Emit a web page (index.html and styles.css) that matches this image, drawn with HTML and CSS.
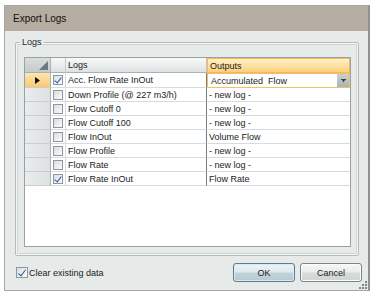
FILE: index.html
```html
<!DOCTYPE html>
<html lang="en">
<head>
  <meta charset="UTF-8" />
  <title>Export Logs</title>
  <link rel="stylesheet" href="styles.css">
</head>
<body>
  <div class="window">
    <div class="titlebar">Export Logs</div>
    <div class="content">
      <fieldset class="group">
        <legend>Logs</legend>
        <div class="grid">
          <div class="hcell corner">
            <svg width="9" height="9" viewBox="0 0 9 9"><path d="M9 0 L9 9 L0 9 Z" fill="#6f787b"/></svg>
          </div>
          <div class="hcell"></div>
          <div class="hcell text">Logs</div>
          <div class="hcell text current">Outputs</div>

          <div class="rh active">
            <svg width="5" height="7" viewBox="0 0 5 7"><path d="M0 0 L5 3.5 L0 7 Z" fill="#111"/></svg>
          </div>
          <div class="cell cb"><span class="box checked"></span></div>
          <div class="cell name">Acc. Flow Rate InOut</div>
          <div class="cell out editing">
            <span class="combo-text">Accumulated&nbsp; Flow</span>
            <span class="drop">
              <svg width="5" height="4" viewBox="0 0 5 4"><path d="M0 0 H5 V1 H0 Z M1 1 H4 L2.5 3.5 Z" fill="#3a4448"/></svg>
            </span>
          </div>

          <div class="rh"></div>
          <div class="cell cb"><span class="box"></span></div>
          <div class="cell name">Down Profile (@ 227 m3/h)</div>
          <div class="cell out">- new log -</div>

          <div class="rh"></div>
          <div class="cell cb"><span class="box"></span></div>
          <div class="cell name">Flow Cutoff 0</div>
          <div class="cell out">- new log -</div>

          <div class="rh"></div>
          <div class="cell cb"><span class="box"></span></div>
          <div class="cell name">Flow Cutoff 100</div>
          <div class="cell out">- new log -</div>

          <div class="rh"></div>
          <div class="cell cb"><span class="box"></span></div>
          <div class="cell name">Flow InOut</div>
          <div class="cell out">Volume Flow</div>

          <div class="rh"></div>
          <div class="cell cb"><span class="box"></span></div>
          <div class="cell name">Flow Profile</div>
          <div class="cell out">- new log -</div>

          <div class="rh"></div>
          <div class="cell cb"><span class="box"></span></div>
          <div class="cell name">Flow Rate</div>
          <div class="cell out">- new log -</div>

          <div class="rh"></div>
          <div class="cell cb"><span class="box checked"></span></div>
          <div class="cell name">Flow Rate InOut</div>
          <div class="cell out">Flow Rate</div>
        </div>
      </fieldset>

      <div class="footer">
        <label class="clear"><span class="box big checked"></span>Clear existing data</label>
        <div class="buttons">
          <button class="btn default">OK</button>
          <button class="btn">Cancel</button>
        </div>
      </div>

      <svg class="grip" width="8" height="8" viewBox="0 0 8 8">
        <g fill="#7d8689">
          <rect x="6" y="0" width="2" height="2"/>
          <rect x="3" y="3" width="2" height="2"/>
          <rect x="6" y="3" width="2" height="2"/>
          <rect x="0" y="6" width="2" height="2"/>
          <rect x="3" y="6" width="2" height="2"/>
          <rect x="6" y="6" width="2" height="2"/>
        </g>
      </svg>
    </div>
  </div>
</body>
</html>
```

FILE: styles.css
```css
body {
  margin: 0;
  background-color: #ffffff;
  font-family: 'Liberation Sans', Arial, sans-serif;
  font-size: 9px;
  color: #1b1b1b;
}
.window {
  margin: 5px 0 0 4px;
  width: 366px;
  height: 286px;
  box-sizing: border-box;
  border: 1px solid #a3a9ab;
  border-right: 2px solid #8d9497;
  background-color: #e6eae9;
  display: flex;
  flex-direction: column;
}
.titlebar {
  height: 25px;
  line-height: 25px;
  padding-left: 8px;
  background-color: #b5aca2;
  font-size: 10px;
  color: #111;
}
.content {
  position: relative;
  flex: 1;
}
.group {
  margin: 6px 0 0 10px;
  width: 344px;
  box-sizing: border-box;
  padding: 9px 7px 8px 8px;
  border: 1px solid #b3bbbc;
  border-radius: 2px;
  box-shadow: inset 0 0 0 1px #f5f7f7, inset 0 0 0 2px #cfd5d6;
}
.group legend {
  margin-left: -4px;
  padding: 0 2px;
  line-height: 11px;
  font-size: 9px;
  color: #1e2a3a;
}
.grid {
  height: 190px;
  box-sizing: border-box;
  border: 1px solid #97a2a6;
  background-color: #ffffff;
  display: grid;
  grid-template-columns: 26px 15px 141px 143px;
  grid-template-rows: 15px 15px repeat(7, 14px);
  align-content: start;
}
.hcell {
  box-sizing: border-box;
  background: linear-gradient(#f8f9f9, #dde1e2);
  border-right: 1px solid #c3c9cb;
  border-bottom: 1px solid #a9b1b3;
  display: flex;
  align-items: center;
}
.hcell.text {
  padding-left: 2px;
}
.hcell.corner {
  background: linear-gradient(#d9dddd, #c5cacb);
  border-right-color: #a9b1b3;
  justify-content: flex-end;
  align-items: flex-end;
  padding: 0 2px 2px 0;
}
.hcell.current {
  background: linear-gradient(#fff1c9, #fcd07c);
  border: 1px solid #f3b85a;
}
.rh {
  box-sizing: border-box;
  background: linear-gradient(90deg, #eaeded, #dde1e1);
  border-right: 1px solid #a9b1b3;
  border-bottom: 1px solid #c9cfd0;
  display: flex;
  align-items: center;
  padding-left: 10px;
}
.rh.active {
  background: linear-gradient(#fde6b0, #fbc970);
}
.cell {
  box-sizing: border-box;
  border-bottom: 1px solid #d5dce1;
  display: flex;
  align-items: center;
  white-space: nowrap;
  overflow: hidden;
}
.cell.cb {
  border-right: 1px solid #d5dce1;
  justify-content: center;
}
.cell.name {
  padding-left: 2px;
  border-right: 1px solid #6f7d84;
}
.cell.out {
  padding-left: 2px;
}
.cell.editing {
  border: 1px solid #f5bf62;
  padding: 0 0 0 3px;
  justify-content: space-between;
}
.drop {
  width: 12px;
  height: 13px;
  background: linear-gradient(#c9d0d3, #aab4b8);
  display: flex;
  align-items: center;
  justify-content: center;
}
.box {
  width: 10px;
  height: 10px;
  box-sizing: border-box;
  border: 1px solid #8e979a;
  background: linear-gradient(135deg, #d9dee0, #fbfcfc);
  position: relative;
}
.box.checked::after {
  content: "";
  position: absolute;
  left: 2px;
  top: 0;
  width: 3px;
  height: 6px;
  border-right: 1.5px solid #2c5eb2;
  border-bottom: 1.5px solid #2c5eb2;
  transform: rotate(38deg);
}
.box.big {
  width: 12px;
  height: 11px;
  margin-right: 1px;
}
.box.big.checked::after {
  left: 3px;
  top: 0;
  height: 7px;
}
.footer {
  margin-top: 7px;
  padding: 0 6px 0 11px;
  display: flex;
  align-items: center;
  justify-content: space-between;
}
.clear {
  display: flex;
  align-items: center;
  font-size: 9px;
}
.buttons {
  display: flex;
  gap: 5px;
}
.btn {
  width: 62px;
  height: 19px;
  padding: 0;
  border: 1px solid #7b8487;
  border-radius: 3px;
  background: linear-gradient(#f6f7f7 0%, #e9ecec 48%, #d7dbdc 52%, #cfd4d5 100%);
  font-family: 'Liberation Sans', Arial, sans-serif;
  font-size: 9px;
  color: #1b1b1b;
  box-shadow: inset 0 0 0 1px #fbfcfc;
}
.btn.default {
  border-color: #5f7d8c;
  background: linear-gradient(#eef3f5 0%, #dfe8ec 48%, #c3d3da 52%, #b6c8d0 100%);
  box-shadow: inset 0 0 0 1px #d4eaf4;
}
.grip {
  position: absolute;
  right: 1px;
  bottom: 1px;
}
```
